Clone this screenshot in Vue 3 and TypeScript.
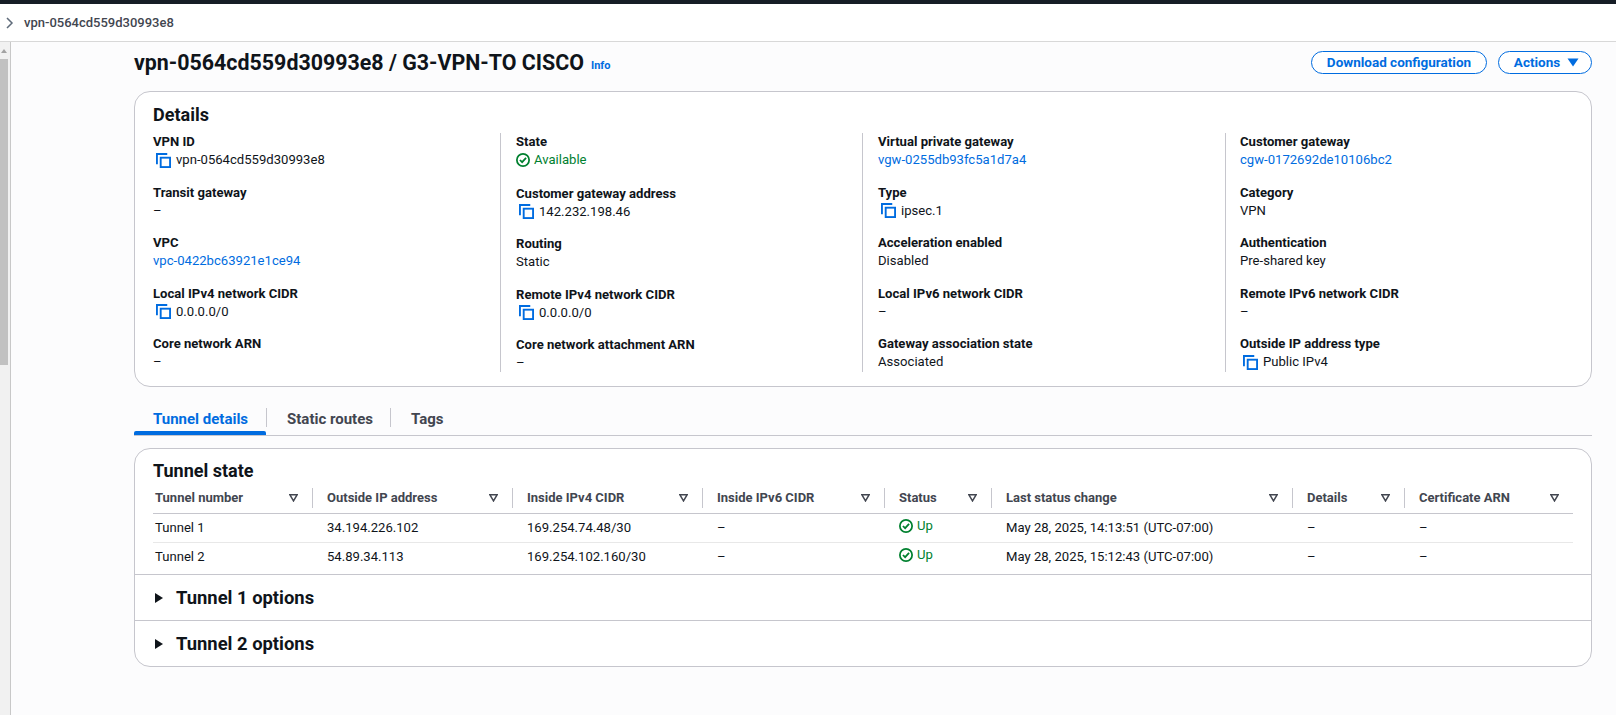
<template>
    <div class="page">
        <div class="top-strip"></div>
        <div class="crumb-bar">
            <svg class="crumb-chevron" width="10" height="12" viewBox="0 0 10 12">
                <path d="M2 1l5 5-5 5" fill="none" stroke="#5f6b7a" stroke-width="1.5" />
            </svg>
            <span>vpn-0564cd559d30993e8</span>
        </div>
        <div class="body-row">
            <div class="scroll-gutter">
                <div class="scroll-arrow"></div>
                <div class="scroll-thumb"></div>
            </div>
            <main class="content">
                <header class="title-row">
                    <h1>vpn-0564cd559d30993e8 / G3-VPN-TO CISCO</h1>
                    <a class="info">Info</a>
                    <div class="actions">
                        <button class="btn btn-wide">Download configuration</button>
                        <button class="btn btn-actions">
                            Actions
                            <svg width="12" height="9" viewBox="0 0 12 9"><path d="M0.5 0.5h11L6 8.5z" fill="#006ce0" /></svg>
                        </button>
                    </div>
                </header>

                <section class="card details">
                    <h2>Details</h2>
                    <div class="detail-grid">
                        <div v-for="(col, c) in detailColumns" :key="c" class="detail-col">
                            <div v-for="item in col" :key="item.label" class="detail-item">
                                <div class="detail-label">{{ item.label }}</div>
                                <div class="detail-value" :class="item.kind">
                                    <svg v-if="item.kind === 'copy'" class="copy-icon" width="15" height="15" viewBox="0 0 16 16">
                                        <path d="M1 12V1h11" fill="none" stroke="#006ce0" stroke-width="2" />
                                        <rect x="5" y="5" width="10" height="10" fill="none" stroke="#006ce0" stroke-width="2" />
                                    </svg>
                                    <svg v-if="item.kind === 'ok'" class="ok-icon" width="14" height="14" viewBox="0 0 16 16">
                                        <circle cx="8" cy="8" r="7" fill="none" stroke="#00802f" stroke-width="2" />
                                        <path d="M4.5 8l2.5 2.5 4.5-5" fill="none" stroke="#00802f" stroke-width="2" />
                                    </svg>
                                    {{ item.value }}
                                </div>
                            </div>
                        </div>
                    </div>
                </section>

                <nav class="tabs">
                    <a v-for="tab in tabs" :key="tab" class="tab" :class="{ active: tab === 'Tunnel details' }">
                        <span>{{ tab }}</span>
                    </a>
                </nav>

                <section class="card tunnels">
                    <div class="tunnel-head">
                        <h2>Tunnel state</h2>
                        <table>
                            <colgroup>
                                <col v-for="w in colWidths" :key="w.name" :style="{ width: w.px + 'px' }" />
                            </colgroup>
                            <thead>
                                <tr>
                                    <th v-for="w in colWidths" :key="w.name">
                                        <div class="th-inner">
                                            <span>{{ w.name }}</span>
                                            <svg width="9" height="8" viewBox="0 0 9 8">
                                                <path d="M0.9 0.8h7.2L4.5 6.9z" fill="none" stroke="#424650" stroke-width="1.5" />
                                            </svg>
                                        </div>
                                    </th>
                                </tr>
                            </thead>
                            <tbody>
                                <tr v-for="row in tunnelRows" :key="row[0]">
                                    <td v-for="(cell, i) in row" :key="i">
                                        <span v-if="cell === 'Up'" class="up">
                                            <svg width="14" height="14" viewBox="0 0 16 16">
                                                <circle cx="8" cy="8" r="7" fill="none" stroke="#00802f" stroke-width="2" />
                                                <path d="M4.5 8l2.5 2.5 4.5-5" fill="none" stroke="#00802f" stroke-width="2" />
                                            </svg>
                                            Up
                                        </span>
                                        <template v-else>{{ cell }}</template>
                                    </td>
                                </tr>
                            </tbody>
                        </table>
                    </div>
                    <div v-for="opt in ['Tunnel 1 options', 'Tunnel 2 options']" :key="opt" class="expander">
                        <svg width="10" height="12" viewBox="0 0 10 12"><path d="M1 1l8 5-8 5z" fill="#0f141a" /></svg>
                        <span>{{ opt }}</span>
                    </div>
                </section>
            </main>
        </div>
    </div>
</template>

<script setup lang="ts">
interface DetailItem {
    label: string;
    value: string;
    kind?: 'copy' | 'ok' | 'link';
}

const detailColumns: DetailItem[][] = [
    [
        { label: 'VPN ID', value: 'vpn-0564cd559d30993e8', kind: 'copy' },
        { label: 'Transit gateway', value: '–' },
        { label: 'VPC', value: 'vpc-0422bc63921e1ce94', kind: 'link' },
        { label: 'Local IPv4 network CIDR', value: '0.0.0.0/0', kind: 'copy' },
        { label: 'Core network ARN', value: '–' },
    ],
    [
        { label: 'State', value: 'Available', kind: 'ok' },
        { label: 'Customer gateway address', value: '142.232.198.46', kind: 'copy' },
        { label: 'Routing', value: 'Static' },
        { label: 'Remote IPv4 network CIDR', value: '0.0.0.0/0', kind: 'copy' },
        { label: 'Core network attachment ARN', value: '–' },
    ],
    [
        { label: 'Virtual private gateway', value: 'vgw-0255db93fc5a1d7a4', kind: 'link' },
        { label: 'Type', value: 'ipsec.1', kind: 'copy' },
        { label: 'Acceleration enabled', value: 'Disabled' },
        { label: 'Local IPv6 network CIDR', value: '–' },
        { label: 'Gateway association state', value: 'Associated' },
    ],
    [
        { label: 'Customer gateway', value: 'cgw-0172692de10106bc2', kind: 'link' },
        { label: 'Category', value: 'VPN' },
        { label: 'Authentication', value: 'Pre-shared key' },
        { label: 'Remote IPv6 network CIDR', value: '–' },
        { label: 'Outside IP address type', value: 'Public IPv4', kind: 'copy' },
    ],
];

const tabs = ['Tunnel details', 'Static routes', 'Tags'];

const colWidths = [
    { name: 'Tunnel number', px: 159 },
    { name: 'Outside IP address', px: 200 },
    { name: 'Inside IPv4 CIDR', px: 190 },
    { name: 'Inside IPv6 CIDR', px: 182 },
    { name: 'Status', px: 107 },
    { name: 'Last status change', px: 301 },
    { name: 'Details', px: 112 },
    { name: 'Certificate ARN', px: 169 },
];

const tunnelRows = [
    ['Tunnel 1', '34.194.226.102', '169.254.74.48/30', '–', 'Up', 'May 28, 2025, 14:13:51 (UTC-07:00)', '–', '–'],
    ['Tunnel 2', '54.89.34.113', '169.254.102.160/30', '–', 'Up', 'May 28, 2025, 15:12:43 (UTC-07:00)', '–', '–'],
];
</script>

<style scoped>
.page {
    height: 715px;
    overflow: hidden;
    background: #fcfcfd;
    color: #0f141a;
    font-family: Roboto, "Liberation Sans", sans-serif;
    font-size: 13.1px;
    line-height: 18px;
}

.top-strip {
    height: 4px;
    background: #161d26;
}

.crumb-bar {
    height: 38px;
    display: flex;
    align-items: center;
    gap: 9px;
    padding-left: 5px;
    background: #fff;
    border-bottom: 1px solid #d8d8d8;
    font-size: 13px;
    font-weight: 500;
    color: #424650;
}

.body-row {
    display: flex;
}

.scroll-gutter {
    width: 11px;
    height: 673px;
    background: #f1f1f1;
    flex: none;
    border-right: 1px solid #c8c8c8;
}

.scroll-arrow {
    height: 17px;
    position: relative;
}

.scroll-arrow::after {
    content: '';
    position: absolute;
    left: 1px;
    top: 7px;
    border: 3px solid transparent;
    border-top: 0;
    border-bottom: 4px solid #a3a3a3;
}

.scroll-thumb {
    width: 8px;
    height: 306px;
    background: #c1c1c1;
}

.content {
    width: 1581px;
    padding-left: 123px;
}

.title-row {
    height: 49px;
    display: flex;
    align-items: center;
    padding-bottom: 7px;
}

h1 {
    margin: 0;
    font-size: 21.4px;
    line-height: 28px;
    font-weight: 700;
}

.info {
    margin: 5px 0 0 7px;
    font-size: 11px;
    font-weight: 700;
    color: #006ce0;
}

.actions {
    margin-left: auto;
    margin-bottom: 2px;
    display: flex;
    gap: 11px;
}

.btn {
    height: 23px;
    border: 1px solid #006ce0;
    border-radius: 12px;
    background: #fff;
    color: #006ce0;
    font: inherit;
    font-size: 13.5px;
    font-weight: 700;
    line-height: 20px;
    padding: 0;
    display: flex;
    align-items: center;
    justify-content: center;
    gap: 7px;
}

.btn-wide {
    width: 176px;
}

.btn-actions {
    width: 94px;
    padding-left: 3px;
}

.card {
    background: #fff;
    border: 1px solid #c6c6cd;
    border-radius: 16px;
}

h2 {
    margin: 0;
    font-size: 18px;
    line-height: 24px;
    font-weight: 700;
}

.details {
    height: 296px;
    padding: 11px 18px 0;
}

.detail-grid {
    display: grid;
    grid-template-columns: 347px 362px 363px 1fr;
    margin-top: 6px;
}

.detail-col {
    height: 239px;
}

.detail-col + .detail-col {
    border-left: 1px solid #c6c6cd;
    padding-left: 15px;
}

.detail-col:last-child {
    padding-left: 14px;
}

.detail-item {
    padding-bottom: 14.5px;
}

.detail-label {
    font-weight: 700;
}

.detail-value {
    display: flex;
    align-items: center;
    gap: 5px;
    height: 18px;
}

.detail-value.copy {
    padding-left: 3px;
}

.detail-value.link {
    color: #006ce0;
}

.detail-value.ok {
    color: #00802f;
    gap: 4px;
    margin-bottom: 1px;
}

.tabs {
    display: flex;
    height: 46px;
    margin-top: 3px;
    border-bottom: 1px solid #c6c6cd;
    align-items: flex-end;
    margin-bottom: 12px;
}

.tab {
    height: 32px;
    padding: 6px 18px 0 19px;
    position: relative;
    font-weight: 700;
    font-size: 15px;
    color: #424650;
    display: flex;
    align-items: flex-start;
    line-height: 20px;
}

.tab + .tab {
    padding-left: 21px;
    padding-right: 17px;
}

.tab + .tab::before {
    content: '';
    position: absolute;
    left: 0;
    top: 5px;
    height: 19px;
    width: 1px;
    background: #c6c6cd;
}

.tab.active {
    color: #006ce0;
}

.tab.active::after {
    content: '';
    position: absolute;
    left: 0;
    right: 0;
    bottom: 0;
    height: 4px;
    background: #006ce0;
    border-radius: 2px 2px 0 0;
}

.tunnels {
    height: 219px;
    overflow: hidden;
}

.tunnel-head {
    height: 126px;
    padding: 10px 18px 0;
    border-bottom: 1px solid #c6c6cd;
}

table {
    width: 100%;
    table-layout: fixed;
    border-collapse: collapse;
    margin-top: 1px;
}

th {
    height: 29px;
    padding: 0;
    text-align: left;
    font-size: 13px;
    font-weight: 700;
    color: #424650;
    border-bottom: 1px solid #c6c6cd;
}

.th-inner {
    display: flex;
    align-items: center;
    justify-content: space-between;
    height: 20px;
    padding: 0 14px;
    border-left: 1px solid #c6c6cd;
}

th:first-child .th-inner {
    border-left: 0;
    padding-left: 2px;
}

td {
    height: 29px;
    padding: 0 0 0 15px;
    border-bottom: 1px solid #e8e8e8;
}

td:first-child {
    padding-left: 2px;
}

tr:last-child td {
    border-bottom: 0;
}

.up {
    display: inline-flex;
    align-items: center;
    gap: 4px;
    color: #00802f;
}

.expander {
    height: 46px;
    display: flex;
    align-items: center;
    gap: 12px;
    padding-left: 19px;
    font-size: 18.4px;
    font-weight: 700;
    border-bottom: 1px solid #c6c6cd;
}

.expander:last-child {
    height: 45px;
    border-bottom: 0;
}
</style>

<style>
*, *::before, *::after {
    box-sizing: border-box;
}

html, body {
    background: #fcfcfd;
}
</style>
